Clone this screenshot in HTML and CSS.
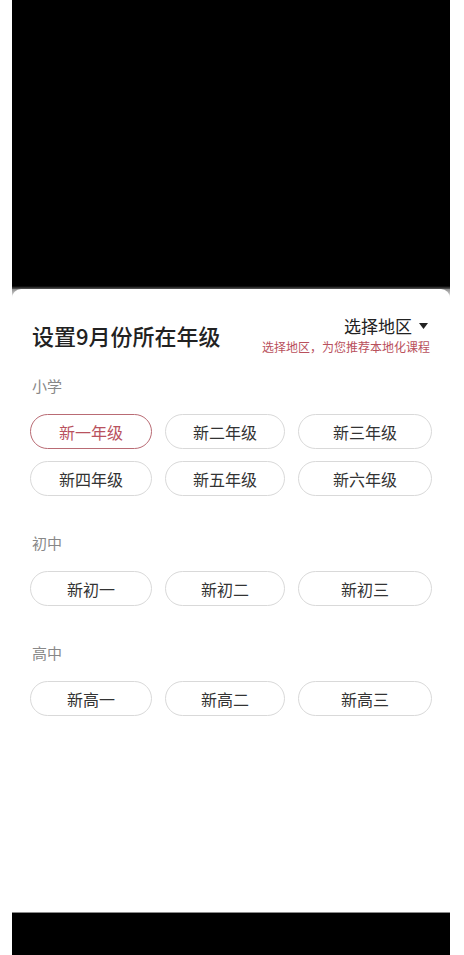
FILE: index.html
```html
<!DOCTYPE html>
<html lang="zh-CN">
<head>
<meta charset="utf-8">
<title>设置年级</title>
<link rel="stylesheet" href="styles.css">
</head>
<body>
<div class="phone">
  <div class="backdrop"></div>
  <div class="sheet-wrap">
    <div class="sheet">
      <div class="header">
        <h1 class="title">设置9月份所在年级</h1>
        <div class="region">
          <div class="region-pick">选择地区<svg class="caret" width="9" height="6" viewBox="0 0 9 6"><path d="M0 0H9L4.5 6Z" fill="#222"/></svg></div>
          <div class="region-tip">选择地区，为您推荐本地化课程</div>
        </div>
      </div>

      <section class="group">
        <div class="group-label">小学</div>
        <div class="grades">
          <div class="grade selected">新一年级</div>
          <div class="grade">新二年级</div>
          <div class="grade">新三年级</div>
          <div class="grade">新四年级</div>
          <div class="grade">新五年级</div>
          <div class="grade">新六年级</div>
        </div>
      </section>

      <section class="group">
        <div class="group-label">初中</div>
        <div class="grades">
          <div class="grade">新初一</div>
          <div class="grade">新初二</div>
          <div class="grade">新初三</div>
        </div>
      </section>

      <section class="group">
        <div class="group-label">高中</div>
        <div class="grades">
          <div class="grade">新高一</div>
          <div class="grade">新高二</div>
          <div class="grade">新高三</div>
        </div>
      </section>
    </div>
  </div>
  <div class="navbar"></div>
</div>
</body>
</html>
```

FILE: styles.css
```css
* { box-sizing: border-box; }
html, body {
  margin: 0;
  padding: 0;
  background: #fff;
  font-family: "Noto Sans CJK SC", "Noto Sans", sans-serif;
}
.phone {
  width: 438px;
  height: 955px;
  margin-left: 12px;
  background: #000;
  display: flex;
  flex-direction: column;
}
.backdrop {
  height: 289px;
  background: linear-gradient(to bottom, #000 0, #000 calc(100% - 3px), #5a5a5a 100%);
}
.sheet-wrap {
  height: 623px;
  background: linear-gradient(to bottom, #8c8c8c 0, #e8e8e8 8px, #fff 12px);
}
.sheet {
  height: 100%;
  background: #fff;
  border-radius: 9px 9px 0 0;
  padding: 26px 18px 0 18px;
}
.header {
  display: flex;
  justify-content: space-between;
  align-items: flex-start;
  padding: 0 2px 0 2px;
}
.title {
  margin: 5px 0 0 0;
  font-size: 22px;
  line-height: 30px;
  font-weight: 500;
  color: #222;
}
.region {
  display: flex;
  flex-direction: column;
  align-items: flex-end;
}
.region-pick {
  display: flex;
  align-items: center;
  font-size: 17px;
  line-height: 22px;
  color: #222;
  margin-right: 2px;
}
.caret {
  margin-left: 7px;
}
.region-tip {
  margin-top: 2px;
  font-size: 12px;
  line-height: 16px;
  color: #b9505c;
}
.group {
  margin-top: 21px;
}
.group + .group {
  margin-top: 37px;
}
.group-label {
  padding-left: 2px;
  font-size: 15px;
  line-height: 20px;
  color: #888;
}
.grades {
  margin-top: 18px;
  display: grid;
  grid-template-columns: 122fr 120fr 134fr;
  column-gap: 13px;
  row-gap: 12px;
}
.grade {
  height: 35px;
  border: 1px solid #d9d9d9;
  border-radius: 18px;
  display: flex;
  align-items: center;
  justify-content: center;
  font-size: 16px;
  color: #333;
}
.grade.selected {
  border-color: #b96b74;
  color: #b9525e;
}
.navbar {
  flex: 1;
  background: #000;
  border-top: 1px solid #8a8a8a;
}
```
